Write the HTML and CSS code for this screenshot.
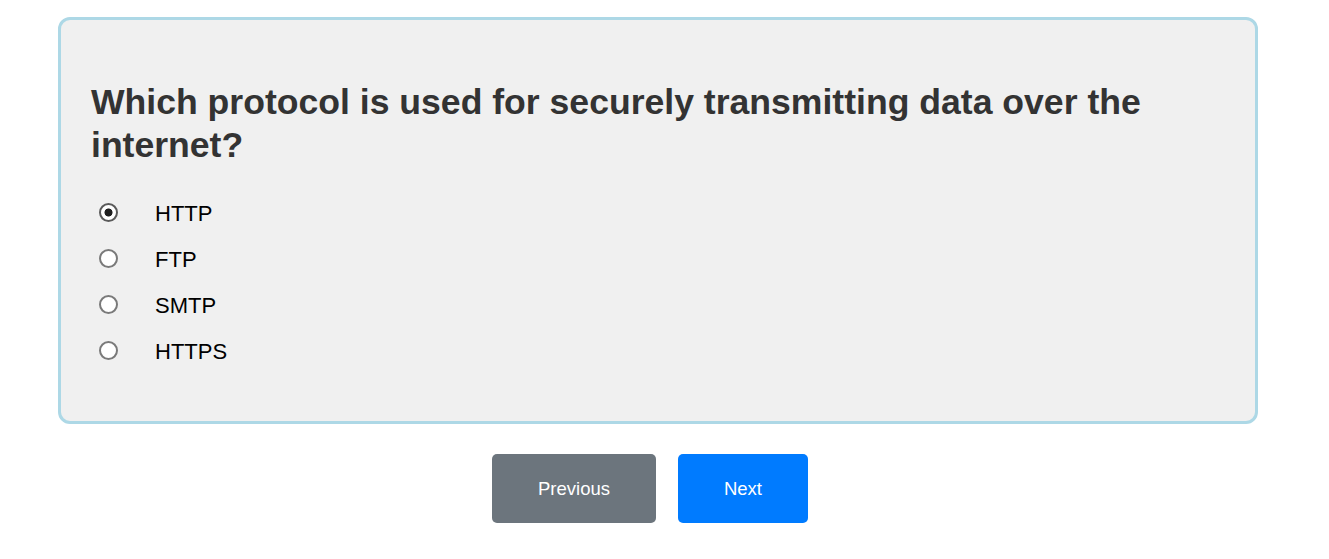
FILE: index.html
```html
<!DOCTYPE html>
<html lang="en">
<head>
<meta charset="utf-8">
<title>Quiz</title>
<link rel="stylesheet" href="styles.css">
</head>
<body>
<div class="page">
  <div class="card">
    <h2 class="question">Which protocol is used for securely transmitting data over the internet?</h2>
    <div class="options">
      <label class="option"><input type="radio" name="q" checked><span>HTTP</span></label>
      <label class="option"><input type="radio" name="q"><span>FTP</span></label>
      <label class="option"><input type="radio" name="q"><span>SMTP</span></label>
      <label class="option"><input type="radio" name="q"><span>HTTPS</span></label>
    </div>
  </div>
  <div class="nav">
    <button class="btn btn-prev">Previous</button>
    <button class="btn btn-next">Next</button>
  </div>
</div>
</body>
</html>
```
FILE: styles.css
```css
body {
  margin: 8px;
  font-family: "Liberation Sans", Arial, sans-serif;
  background: #ffffff;
}
.page {
  padding: 9px 50px 0 50px;
}
.card {
  width: 1200px;
  box-sizing: border-box;
  background: #f0f0f0;
  border: 3px solid #add8e6;
  border-radius: 12px;
  padding: 61px 30px 46px 30px;
}
.question {
  margin: 0 0 25px 0;
  font-size: 35.6px;
  line-height: 1.2;
  font-weight: bold;
  color: #333333;
}
.options {
  display: flex;
  flex-direction: column;
}
.option {
  display: flex;
  align-items: center;
  height: 46px;
  font-size: 22px;
  color: #000;
}
.option input {
  appearance: none;
  -webkit-appearance: none;
  box-sizing: border-box;
  margin: 0 0 0 7.5px;
  width: 19.5px;
  height: 19.5px;
  border: 2px solid #7a7a7a;
  border-radius: 50%;
  background: #ffffff;
  transform: translateY(-2px);
}
.option input:checked {
  border-color: #5a5a5a;
  background: radial-gradient(circle, #1e1e1e 0 3.6px, #ffffff 4.4px);
}
.option span {
  margin-left: 37px;
}
.nav {
  display: flex;
  justify-content: center;
  gap: 22px;
  width: 1200px;
  padding-right: 16px;
  box-sizing: border-box;
  margin-top: 30px;
}
.btn {
  border: none;
  border-radius: 5px;
  color: #fff;
  font-family: "Liberation Sans", Arial, sans-serif;
  font-size: 18.5px;
  height: 69px;
  padding: 0 46px;
}
.btn-prev { background: #6c757d; }
.btn-next { background: #007bff; }
```
